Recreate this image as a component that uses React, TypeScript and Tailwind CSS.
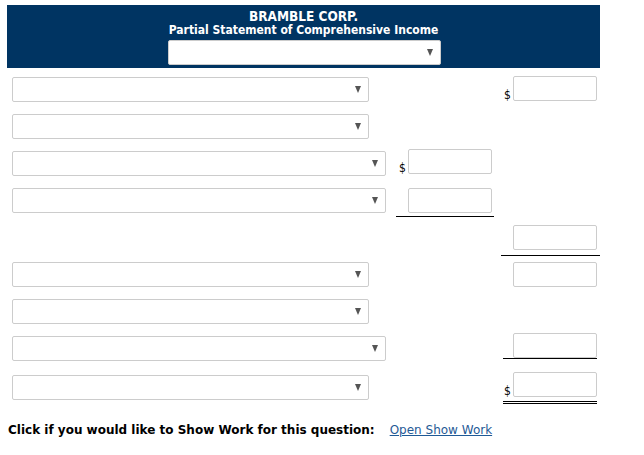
import React from "react";

const font = { fontFamily: '"DejaVu Sans Condensed", "DejaVu Sans", sans-serif' };

const Select: React.FC<{ wide?: boolean }> = ({ wide }) => (
  <div
    className={`relative h-[25px] bg-white border border-[#cccccc] rounded-[2px] ${
      wide ? "w-[374px]" : "w-[357px]"
    }`}
  >
    <span className="absolute right-[7px] top-[8px] w-0 h-0 border-l-[3.5px] border-r-[3.5px] border-t-[7px] border-l-transparent border-r-transparent border-t-[#555555]" />
  </div>
);

const Amount: React.FC<{ dollar?: boolean }> = ({ dollar }) => (
  <div className="flex items-end">
    <span className="w-[9px] text-[12px] leading-[12px] text-black">
      {dollar ? "$" : ""}
    </span>
    <div className="w-[84px] h-[25px] bg-white border border-[#cccccc] rounded-[2px]" />
  </div>
);

export default function App() {
  return (
    <div className="w-[644px] h-[455px] bg-white pt-[5px]" style={font}>
      <div className="ml-[7px] w-[593px] h-[63px] bg-[#003462] flex flex-col items-center pt-[4px]">
        <div className="text-white font-bold text-[13.5px] leading-[14px]">BRAMBLE CORP.</div>
        <div className="text-white font-bold text-[12px] leading-[14px]">
          Partial Statement of Comprehensive Income
        </div>
        <div className="relative ml-[2px] mt-[3px] w-[273px] h-[25px] bg-white border border-[#cccccc] rounded-[2px]">
          <span className="absolute right-[7px] top-[8px] w-0 h-0 border-l-[3.5px] border-r-[3.5px] border-t-[7px] border-l-transparent border-r-transparent border-t-[#555555]" />
        </div>
      </div>

      <div className="pl-[12px] pt-[3px]">
        {/* row 1 */}
        <div className="grid grid-cols-[384px_105px_99px] h-[37px] items-center">
          <Select />
          <div />
          <div className="flex justify-end pr-[3px] mb-[2px]">
            <Amount dollar />
          </div>
        </div>
        {/* row 2 */}
        <div className="grid grid-cols-[384px_105px_99px] h-[37px] items-center">
          <Select />
        </div>
        {/* row 3 */}
        <div className="grid grid-cols-[384px_105px_99px] h-[37px] items-center">
          <Select wide />
          <div className="flex pl-[3px] mb-[4px]">
            <Amount dollar />
          </div>
        </div>
        {/* row 4 */}
        <div className="grid grid-cols-[384px_105px_99px] h-[37px] items-center">
          <Select wide />
          <div className="w-[98px] border-b border-black pb-[3px] pt-[3px] flex pl-[3px]">
            <Amount />
          </div>
        </div>
        {/* row 5 */}
        <div className="grid grid-cols-[384px_105px_99px] h-[37px] items-center">
          <div />
          <div />
          <div className="border-b border-black pb-[5px] mt-[5px] flex justify-end pr-[3px]">
            <Amount />
          </div>
        </div>
        {/* row 6 */}
        <div className="grid grid-cols-[384px_105px_99px] h-[37px] items-center">
          <Select />
          <div />
          <div className="flex justify-end pr-[3px]">
            <Amount />
          </div>
        </div>
        {/* row 7 */}
        <div className="grid grid-cols-[384px_105px_99px] h-[37px] items-center">
          <Select />
        </div>
        {/* row 8 */}
        <div className="grid grid-cols-[384px_105px_99px] h-[37px] items-center">
          <Select wide />
          <div />
          <div className="ml-[2px] w-[94px] border-b border-black flex justify-end mb-[5px]">
            <Amount />
          </div>
        </div>
        {/* row 9 */}
        <div className="grid grid-cols-[384px_105px_99px] h-[37px] items-end">
          <div className="pb-[4px]">
            <Select />
          </div>
          <div />
          <div className="ml-[2px] w-[94px] border-b-[3px] border-double border-black pb-[4px] flex justify-end">
            <Amount dollar />
          </div>
        </div>
      </div>

      <div
        className="pl-[8px] mt-[17px] flex items-baseline"
        style={{ fontFamily: '"DejaVu Sans", sans-serif' }}
      >
        <span className="font-bold text-[12px] text-black">
          Click if you would like to Show Work for this question:
        </span>
        <a href="#" className="ml-[15px] text-[12px] text-[#1f5a96] underline">
          Open Show Work
        </a>
      </div>
    </div>
  );
}
